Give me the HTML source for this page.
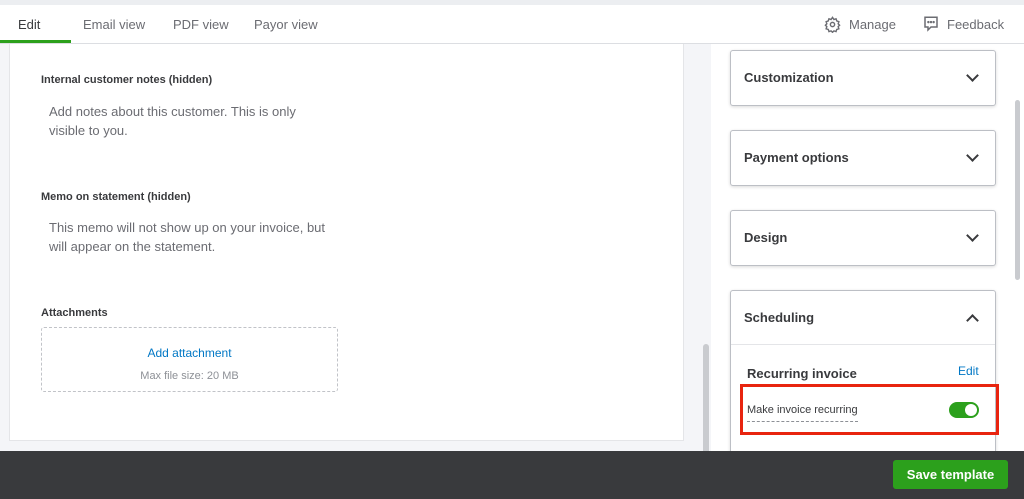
<html><head><style>
body{margin:0;width:1024px;height:499px;overflow:hidden;font-family:"Liberation Sans",sans-serif;background:#f4f5f8;position:relative}
.a{position:absolute}
.tab{position:absolute;top:17px;font-size:13px;color:#6b6c72}
.card{position:absolute;left:730px;width:264px;background:#fff;border:1px solid #bcbfc5;border-radius:3px;box-shadow:0 1px 3px rgba(0,0,0,.15)}
.card b{position:absolute;left:13px;font-size:13px;color:#393a3d}
.chev{position:absolute;right:18px;width:7px;height:7px;border-right:2px solid #393a3d;border-bottom:2px solid #393a3d}
.lbl{position:absolute;left:41px;font-size:11px;font-weight:bold;color:#393a3d}
.txt{position:absolute;left:49px;font-size:13px;color:#6b6c72;line-height:19px}
</style></head><body>
<div class="a" style="left:0;top:0;width:1024px;height:5px;background:#eceef1"></div>
<div class="a" style="left:0;top:5px;width:1024px;height:38px;background:#fff;border-bottom:1px solid #dcdee2"></div>
<div class="tab" style="left:18px;color:#393a3d">Edit</div>
<div class="a" style="left:0;top:40px;width:71px;height:3px;background:#2ca01c"></div>
<div class="tab" style="left:83px">Email view</div>
<div class="tab" style="left:173px">PDF view</div>
<div class="tab" style="left:254px">Payor view</div>
<svg class="a" style="left:824px;top:16px" width="17" height="17" viewBox="0 0 24 24" fill="none" stroke="#6b6c72" stroke-width="2"><circle cx="12" cy="12" r="3"/><path d="M12 2l2 3 3-1 1 3 3 1-1 3 2 2-2 2 1 3-3 1-1 3-3-1-2 2-2-2-3 1-1-3-3-1 1-3-2-2 2-2-1-3 3-1 1-3 3 1z"/></svg>
<div class="tab" style="left:849px">Manage</div>
<svg class="a" style="left:922px;top:15px" width="18" height="18" viewBox="0 0 24 24" fill="none" stroke="#6b6c72" stroke-width="2"><path d="M4 3h16v13h-8l-4 4v-4H4z"/><circle cx="8.5" cy="9.5" r=".6" fill="#6b6c72"/><circle cx="12" cy="9.5" r=".6" fill="#6b6c72"/><circle cx="15.5" cy="9.5" r=".6" fill="#6b6c72"/></svg>
<div class="tab" style="left:947px">Feedback</div>
<div class="a" style="left:9px;top:44px;width:673px;height:396px;background:#fff;border:1px solid #e4e5e8;border-top:none"></div>
<div class="lbl" style="top:74px">Internal customer notes (hidden)</div>
<div class="txt" style="top:102px">Add notes about this customer. This is only<br>visible to you.</div>
<div class="lbl" style="top:191px">Memo on statement (hidden)</div>
<div class="txt" style="top:218px">This memo will not show up on your invoice, but<br>will appear on the statement.</div>
<div class="lbl" style="top:307px">Attachments</div>
<div class="a" style="left:41px;top:327px;width:295px;height:63px;border:1px dashed #c1c3c8;border-radius:3px"></div>
<div class="a" style="left:41px;top:346px;width:297px;text-align:center;font-size:12px;color:#0077c5">Add attachment</div>
<div class="a" style="left:41px;top:370px;width:297px;text-align:center;font-size:11px;color:#8d9096">Max file size: 20 MB</div>
<div class="a" style="left:703px;top:344px;width:6px;height:110px;background:#c9cbcf;border-radius:3px"></div>
<div class="a" style="left:711px;top:44px;width:313px;height:410px;background:#fff"></div>
<div class="a" style="left:1015px;top:100px;width:5px;height:180px;background:#c9cbcf;border-radius:3px"></div>
<div class="card" style="top:50px;height:54px"><b style="top:19px">Customization</b><div class="chev" style="top:20px;transform:rotate(45deg)"></div></div>
<div class="card" style="top:130px;height:54px"><b style="top:19px">Payment options</b><div class="chev" style="top:20px;transform:rotate(45deg)"></div></div>
<div class="card" style="top:210px;height:54px"><b style="top:19px">Design</b><div class="chev" style="top:20px;transform:rotate(45deg)"></div></div>
<div class="card" style="top:290px;height:170px"><b style="top:19px">Scheduling</b><div class="chev" style="top:25px;transform:rotate(-135deg)"></div>
<div class="a" style="left:0;top:53px;width:264px;border-top:1px solid #e4e5e8"></div></div>
<div class="a" style="left:747px;top:366px;font-size:13px;font-weight:bold;color:#393a3d">Recurring invoice</div>
<div class="a" style="left:958px;top:364px;font-size:12px;color:#0077c5">Edit</div>
<div class="a" style="left:740px;top:384px;width:259px;height:51px;border:3px solid #e8240f;box-sizing:border-box"></div>
<div class="a" style="left:747px;top:404px;font-size:11px;color:#393a3d;border-bottom:1px dashed #8d9096;padding-bottom:5px">Make invoice recurring</div>
<div class="a" style="left:949px;top:402px;width:30px;height:16px;background:#2ca01c;border-radius:8px"><div class="a" style="right:2px;top:2px;width:12px;height:12px;background:#fff;border-radius:50%"></div></div>
<div class="a" style="left:0;top:451px;width:1024px;height:48px;background:#393a3d"></div>
<div class="a" style="left:893px;top:460px;width:115px;height:29px;background:#2ca01c;border-radius:3px;color:#fff;font-size:13px;font-weight:bold;text-align:center;line-height:29px">Save template</div>
</body></html>
